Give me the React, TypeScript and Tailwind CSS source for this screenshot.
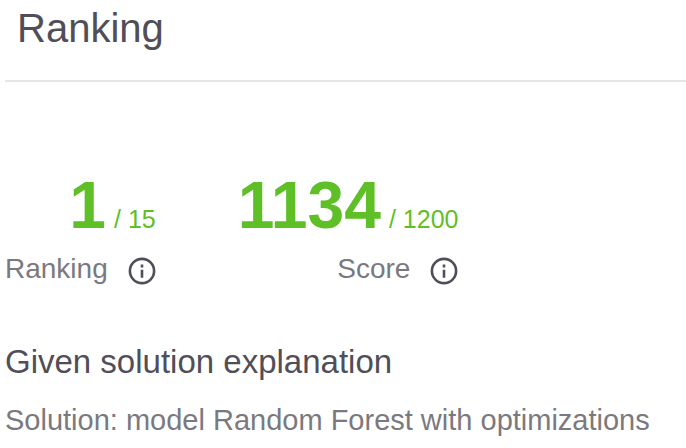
import React from "react";

function InfoButton({ label }: { label: string }) {
  return (
    <button type="button" aria-label={label} className="h-7 w-7 text-[#504e59]">
      <svg viewBox="0 0 28 28" className="h-7 w-7" fill="none" stroke="currentColor" strokeWidth="2.6">
        <circle cx="14" cy="14" r="12.1" />
        <path d="M14 12.7v8M14 7.6v2.8" />
      </svg>
    </button>
  );
}

function Stat({ value, total, label }: { value: string; total: string; label: string }) {
  return (
    <div className="flex flex-col items-end">
      <p className="flex items-baseline gap-2 leading-[72px] text-[#5fbf27]">
        <span className="text-[66px] font-bold">{value}</span>
        <span className="text-[25px] leading-none">/ {total}</span>
      </p>
      <div className="flex items-center gap-5 pt-3 text-[28px] leading-8 text-[#7b7980]">
        <span className="pb-1">{label}</span>
        <InfoButton label={`About ${label}`} />
      </div>
    </div>
  );
}

export default function App() {
  return (
    <main className="bg-white pl-[5px] font-['Liberation_Sans',Arial,sans-serif] text-[#504e59]">
      <header className="border-b-2 border-[#e6e6e6] pb-7 pl-3 pt-1">
        <h1 className="text-[40px] leading-[48px]">Ranking</h1>
      </header>
      <section className="flex gap-[82px] pt-[87px]">
        <Stat value="1" total="15" label="Ranking" />
        <Stat value="1134" total="1200" label="Score" />
      </section>
      <section className="pt-[53px]">
        <h2 className="text-[33px] leading-10">Given solution explanation</h2>
        <p className="pt-[22px] text-[29px] leading-8 text-[#7b7980]">Solution: model Random Forest with optimizations</p>
      </section>
    </main>
  );
}
